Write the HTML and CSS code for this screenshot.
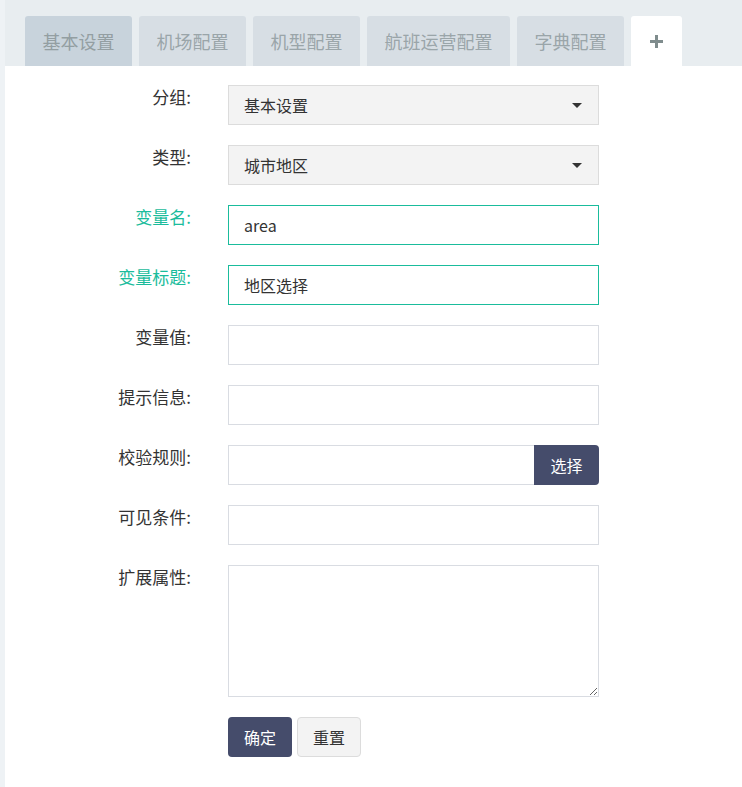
FILE: index.html
```html
<!DOCTYPE html>
<html lang="zh-CN">
<head>
  <meta charset="UTF-8" />
  <meta name="viewport" content="width=device-width, initial-scale=1.0" />
  <title>系统配置</title>
  <link rel="stylesheet" href="styles.css">
</head>
<body>
  <div class="main">
    <nav class="tabs">
      <a class="tab current">基本设置</a>
      <a class="tab">机场配置</a>
      <a class="tab">机型配置</a>
      <a class="tab">航班运营配置</a>
      <a class="tab">字典配置</a>
      <a class="tab add">
        <svg width="13" height="13" viewBox="0 0 13 13"><path d="M5 0h3v5h5v3H8v5H5V8H0V5h5z" fill="#7f8c8d"/></svg>
      </a>
    </nav>

    <section class="panel">
      <form class="config-form" onsubmit="return false">
        <div class="row">
          <label>分组:</label>
          <div class="select-wrap">
            <select class="field">
              <option>基本设置</option>
            </select>
          </div>
        </div>
        <div class="row">
          <label>类型:</label>
          <div class="select-wrap">
            <select class="field">
              <option>城市地区</option>
            </select>
          </div>
        </div>
        <div class="row">
          <label class="required">变量名:</label>
          <input class="field valid" type="text" value="area" />
        </div>
        <div class="row">
          <label class="required">变量标题:</label>
          <input class="field valid" type="text" value="地区选择" />
        </div>
        <div class="row">
          <label>变量值:</label>
          <input class="field" type="text" />
        </div>
        <div class="row">
          <label>提示信息:</label>
          <input class="field" type="text" />
        </div>
        <div class="row">
          <label>校验规则:</label>
          <div class="input-group">
            <input class="field" type="text" />
            <button type="button" class="btn btn-dark addon">选择</button>
          </div>
        </div>
        <div class="row">
          <label>可见条件:</label>
          <input class="field" type="text" />
        </div>
        <div class="row">
          <label>扩展属性:</label>
          <textarea class="field area"></textarea>
        </div>
        <div class="row actions">
          <button type="submit" class="btn btn-dark">确定</button>
          <button type="reset" class="btn btn-light">重置</button>
        </div>
      </form>
    </section>
  </div>
</body>
</html>
```

FILE: styles.css
```css
:root {
  --page-bg: #eef2f5;
  --bar-bg: #e8edf0;
  --tab-bg: #d7dee4;
  --tab-current: #c8d3dc;
  --tab-text: #9aa5a9;
  --green: #1abc9c;
  --dark: #454c6b;
  --border: #d9dce2;
  --text: #333;
}

* {
  box-sizing: border-box;
}

body {
  margin: 0;
  background-color: var(--page-bg);
  color: var(--text);
  font-family: "Noto Sans CJK SC", "Noto Sans", sans-serif;
}

.main {
  margin-left: 5px;
  min-height: 787px;
  display: flex;
  flex-direction: column;
}

.tabs {
  display: flex;
  gap: 7px;
  padding: 16px 20px 0;
  background-color: var(--bar-bg);
}

.tab {
  display: flex;
  align-items: center;
  justify-content: center;
  height: 50px;
  padding: 0 17.5px;
  border-radius: 3px 3px 0 0;
  background-color: var(--tab-bg);
  color: var(--tab-text);
  font-size: 18px;
  cursor: pointer;
}

.tab.current {
  background-color: var(--tab-current);
  color: #939ea2;
}

.tab.add {
  width: 51px;
  padding: 0;
  background-color: #fff;
}

.panel {
  flex: 1;
  background-color: #fff;
  padding: 19px 0 30px;
}

.row {
  display: flex;
  align-items: flex-start;
  margin-bottom: 20px;
}

.row label {
  width: 186px;
  margin-right: 37px;
  text-align: right;
  font-size: 17px;
  line-height: 24px;
}

.row label.required {
  color: var(--green);
}

.field {
  width: 371px;
  height: 40px;
  padding: 0 15px;
  border: 1px solid var(--border);
  border-radius: 0;
  background-color: #fff;
  color: var(--text);
  font-family: inherit;
  font-size: 16px;
  outline: none;
}

.field.valid {
  border-color: var(--green);
}

.select-wrap {
  position: relative;
}

.select-wrap select {
  appearance: none;
  background-color: #f3f3f3;
  border-color: #dcdcdc;
}

.select-wrap::after {
  content: "";
  position: absolute;
  right: 17px;
  top: 18px;
  border-left: 5px solid transparent;
  border-right: 5px solid transparent;
  border-top: 5px solid #333;
  pointer-events: none;
}

.input-group {
  display: flex;
  width: 371px;
}

.input-group .field {
  width: auto;
  flex: 1;
  border-right: none;
}

.field.area {
  height: 132px;
  padding: 8px 15px;
  resize: vertical;
}

.btn {
  height: 40px;
  padding: 0 15px;
  border: 1px solid transparent;
  border-radius: 4px;
  font-family: inherit;
  font-size: 16px;
  cursor: pointer;
}

.btn-dark {
  background-color: var(--dark);
  color: #fff;
}

.btn-light {
  background-color: #f3f3f3;
  border-color: #dcdcdc;
  color: var(--text);
}

.addon {
  width: 65px;
  padding: 0;
  border-radius: 0 4px 4px 0;
}

.actions {
  padding-left: 223px;
  gap: 5px;
}
```
